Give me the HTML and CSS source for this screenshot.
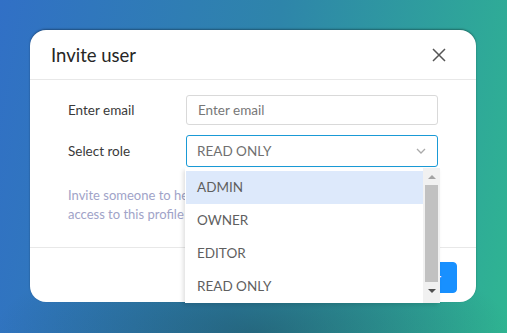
FILE: index.html
```html
<!DOCTYPE html>
<html>
<head>
    <link rel="stylesheet" href="styles.css">
</head>
<body>
    <div class="backdrop">
        <div class="modal">
            <div class="modal-header">
                <h2 class="modal-title">Invite user</h2>
                <button class="close">
                    <svg width="14" height="14" viewBox="0 0 14 14"><path d="M1 1 L13 13 M13 1 L1 13" stroke="#555" stroke-width="1.5" fill="none"/></svg>
                </button>
            </div>
            <div class="modal-body">
                <div class="form-row">
                    <label class="form-label">Enter email</label>
                    <input class="form-input" type="text" placeholder="Enter email">
                </div>
                <div class="form-row">
                    <label class="form-label">Select role</label>
                    <div class="select-wrap">
                        <div class="select-box">
                            <span>READ ONLY</span>
                            <svg width="10" height="6" viewBox="0 0 10 6"><path d="M1 1 L5 5 L9 1" stroke="#aaa" stroke-width="1.3" fill="none"/></svg>
                        </div>
                        <div class="dropdown">
                            <ul class="options">
                                <li class="option active">ADMIN</li>
                                <li class="option">OWNER</li>
                                <li class="option">EDITOR</li>
                                <li class="option">READ ONLY</li>
                            </ul>
                            <div class="scrollbar">
                                <span class="arrow up"></span>
                                <span class="thumb"></span>
                                <span class="arrow down"></span>
                            </div>
                        </div>
                    </div>
                </div>
                <p class="hint">Invite someone to help manage this profile. They will get<br>access to this profile based on the role you select.</p>
            </div>
            <div class="modal-footer">
                <button class="btn">Cancel</button>
                <button class="btn primary">Invite user</button>
            </div>
        </div>
    </div>
</body>
</html>
```

FILE: styles.css
```css
* {
    box-sizing: border-box;
}
body {
    margin: 0;
    font-family: Lato, "Liberation Sans", sans-serif;
}
.backdrop {
    width: 507px;
    height: 333px;
    padding: 30px 0 0 30px;
    overflow: hidden;
    background:
        radial-gradient(ellipse 260px 90px at 50% 100%, rgba(20, 40, 50, 0.35), transparent),
        linear-gradient(100deg, #3170c6 0%, #2e85aa 50%, #2fb592 100%);
}
.modal {
    width: 446px;
    height: 272px;
    background: #fff;
    border-radius: 16px;
    box-shadow: 0 -1px 2px rgba(0, 0, 0, 0.35);
    display: flex;
    flex-direction: column;
}
.modal-header {
    height: 50px;
    padding: 0 30px 0 21px;
    display: flex;
    align-items: center;
    justify-content: space-between;
    border-bottom: 1px solid #e8e8e8;
}
.modal-title {
    margin: 0;
    font-size: 18.5px;
    font-weight: 400;
    color: #262626;
}
.close {
    border: 0;
    background: none;
    padding: 0;
    display: flex;
}
.modal-body {
    padding: 15px 38px 0 38px;
    height: 168px;
    border-bottom: 1px solid #e8e8e8;
}
.form-row {
    display: flex;
    align-items: center;
    margin-bottom: 10px;
}
.form-label {
    width: 118px;
    font-size: 13.5px;
    color: #3a3a3a;
}
.form-input {
    flex: 1;
    height: 30px;
    border: 1px solid #d9d9d9;
    border-radius: 3px;
    padding: 0 11px;
    font-family: inherit;
    font-size: 13.5px;
    color: #333;
}
.form-input::placeholder {
    color: #777;
}
.select-wrap {
    flex: 1;
    position: relative;
}
.select-box {
    height: 32px;
    border: 1px solid #1a9ad6;
    border-radius: 3px;
    padding: 0 11px 0 10px;
    display: flex;
    align-items: center;
    justify-content: space-between;
    font-size: 13.5px;
    color: #707070;
}
.dropdown {
    position: absolute;
    top: 33px;
    left: -1px;
    width: 255px;
    height: 135px;
    background: #fff;
    box-shadow: -2px 2px 4px rgba(0, 0, 0, 0.12);
    display: flex;
    padding-top: 3px;
    z-index: 2;
}
.options {
    list-style: none;
    margin: 0;
    padding: 0 0 0 1px;
    flex: 1;
}
.option {
    height: 33px;
    line-height: 33px;
    padding-left: 11px;
    font-size: 13.5px;
    color: #5f5f5f;
}
.option.active {
    background: #dde9fb;
}
.scrollbar {
    width: 17px;
    margin-top: -3px;
    background: #f1f1f1;
    display: flex;
    flex-direction: column;
    align-items: center;
}
.arrow {
    width: 0;
    height: 0;
    border-left: 4px solid transparent;
    border-right: 4px solid transparent;
}
.arrow.up {
    margin-top: 7px;
    border-bottom: 4px solid #a3a3a3;
}
.arrow.down {
    margin-top: 7px;
    border-top: 4px solid #505050;
}
.thumb {
    width: 13px;
    height: 97px;
    margin-top: 6px;
    background: #c1c1c1;
}
.hint {
    margin: 19px 0 0;
    font-size: 13px;
    line-height: 19px;
    color: #a0a3c8;
}
.modal-footer {
    display: flex;
    justify-content: flex-end;
    gap: 8px;
    padding: 14px 19px 0;
}
.btn {
    height: 31px;
    padding: 0 15px;
    border: 1px solid #d9d9d9;
    border-radius: 4px;
    background: #fff;
    font-family: inherit;
    font-size: 14px;
    color: #333;
}
.btn.primary {
    background: #1890ff;
    border-color: #1890ff;
    color: #fff;
}
```
